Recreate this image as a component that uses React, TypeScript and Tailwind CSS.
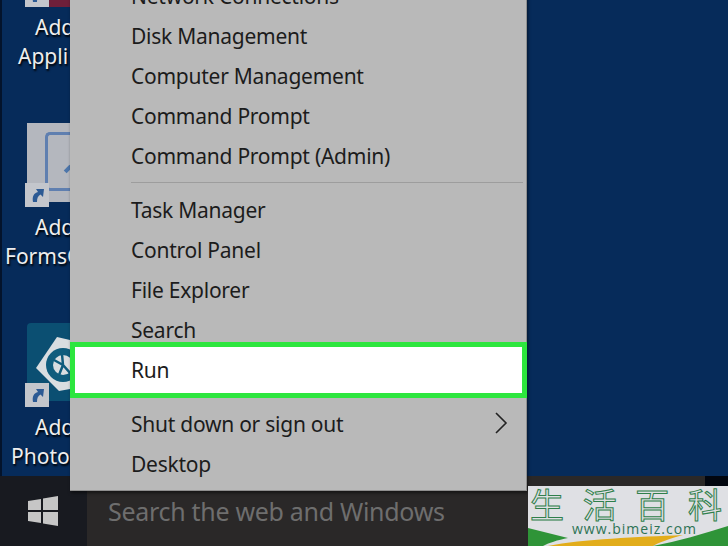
import React from "react";

const Shortcut = ({ className }: { className: string }) => (
  <div className={`absolute w-6 h-6 bg-[#c3c6cc] flex items-center justify-center ${className}`}>
    <svg width="18" height="18" viewBox="0 0 18 18">
      <path d="M5 16 C4 10 6 7 10 6 L8 3 L16 3 L15 11 L12.5 8.5 C10 10 9 12 9 16 Z" fill="#2c5a94" />
    </svg>
  </div>
);

const DesktopLabel = ({ lines, className }: { lines: [string, string]; className: string }) => (
  <div className={`absolute text-[21px] leading-[29px] text-[#eeeeee] whitespace-nowrap [text-shadow:1px_2px_2px_#000] ${className}`}>
    <div className="pl-[17px]">{lines[0]}</div>
    <div>{lines[1]}</div>
  </div>
);

const Item = ({ label }: { label: string }) => (
  <div className="h-10 shrink-0 pl-[61px] pt-[4px] flex items-center text-[21px] tracking-[-0.25px] text-[#1c1c1c] whitespace-nowrap">{label}</div>
);

export default function App() {
  return (
    <div className="relative w-[728px] h-[546px] overflow-hidden bg-[#062b5a] font-['Noto_Sans',sans-serif]">
      {/* left edge of the screen */}
      <div className="absolute left-0 top-0 w-[2px] h-full bg-[#03132b]" />

      {/* desktop icons */}
      <div className="absolute left-[25px] top-0 w-[45px] h-[7px] bg-[#6e1f3a]" />
      <Shortcut className="left-[25px] top-[-17px]" />
      <DesktopLabel lines={["Add", "Appli"]} className="left-[18px] top-[13px]" />

      <div className="absolute left-[27px] top-[123px] w-[43px] h-[79px] bg-[#b4b7be] pl-[18px] pt-[9px]">
        <div className="w-full h-[59px] border-[3px] border-r-0 border-[#5f7fb0] rounded-l-[5px] flex items-center">
          <div className="ml-[18px] mt-[14px] w-[8px] h-[8px] bg-[#4d76ab] rotate-45" />
        </div>
      </div>
      <Shortcut className="left-[25px] top-[183px]" />
      <DesktopLabel lines={["Add", "FormsC"]} className="left-[5px] top-[213px] [&>div:first-child]:pl-[30px]" />

      <div className="absolute left-[27px] top-[323px] w-[43px] h-[78px] bg-[#0b4f72] rounded-tl-[4px] overflow-hidden">
        <svg width="43" height="78" viewBox="0 0 43 78">
          <path d="M9 45 L30 14 L43 17 L43 66 L32 68 Z" fill="#d9dde0" />
          <circle cx="36" cy="42" r="17" fill="#0f5c7d" />
          <circle cx="36" cy="42" r="10" fill="#d9dde0" />
          <path d="M36 42 L27 37 M36 42 L32 52 M36 42 L35 31 M36 42 L43 50" stroke="#0f5c7d" strokeWidth="2.5" />
        </svg>
      </div>
      <Shortcut className="left-[25px] top-[383px]" />
      <DesktopLabel lines={["Add", "Photos"]} className="left-[11px] top-[413px] [&>div:first-child]:pl-[24px]" />

      {/* taskbar */}
      <div className="absolute left-0 right-0 bottom-0 h-[70px] flex">
        <div className="w-[87px] bg-[#181a20] flex items-center justify-center pb-[1px]">
          <svg width="30" height="30" viewBox="0 0 30 30" fill="#c6c6c6" className="-ml-[1px]">
            <path d="M0 5 L13 3 L13 14 L0 14 Z M15 2.6 L30 0 L30 14 L15 14 Z M0 16 L13 16 L13 27 L0 25 Z M15 16 L30 16 L30 30 L15 27.4 Z" />
          </svg>
        </div>
        <div className="w-[618px] bg-[#2a2828] pl-[21px] pt-[2px] flex items-center text-[25px] tracking-[-0.3px] text-[#6e6e6e] whitespace-nowrap">
          Search the web and Windows
        </div>
        <div className="flex-1 bg-[#02060f]" />
      </div>

      {/* context menu */}
      <div className="absolute left-[70px] top-[-25px] w-[457px] h-[516px] bg-[#b9b9b9] border-r border-b border-[#8f8f8f] shadow-[1px_2px_3px_rgba(0,0,0,0.5)] flex flex-col">
        <Item label="Network Connections" />
        <Item label="Disk Management" />
        <Item label="Computer Management" />
        <Item label="Command Prompt" />
        <Item label="Command Prompt (Admin)" />
        <div className="ml-[61px] mr-[3px] mt-[7px] mb-[6px] h-[1px] shrink-0 bg-[#9d9d9d]" />
        <Item label="Task Manager" />
        <Item label="Control Panel" />
        <Item label="File Explorer" />
        <Item label="Search" />
        <div className="h-[56px] shrink-0 -mt-[7px] -mb-[9px] z-10 -mr-[1px] bg-white border-[5px] border-[#2de63e] pl-[56px] pt-[2px] flex items-center text-[21px] tracking-[-0.25px] text-[#1c1c1c]">
          Run
        </div>
        <div className="h-[14px] shrink-0" />
        <div className="h-10 shrink-0 pl-[61px] pr-[18px] flex items-center justify-between text-[21px] tracking-[-0.25px] text-[#1c1c1c]">
          <span className="pt-[4px]">Shut down or sign out</span>
          <svg width="14" height="22" viewBox="0 0 14 22" fill="none" stroke="#222" strokeWidth="1.6">
            <path d="M2 1 L12 11 L2 21" />
          </svg>
        </div>
        <Item label="Desktop" />
      </div>

      {/* watermark */}
      <div className="absolute left-[528px] top-[486px] w-[200px] h-[60px] bg-[#dfe0e4] overflow-hidden">
        <div className="flex justify-between pl-[2px] pr-[6px] text-[34px] leading-[36px] font-['Noto_Sans_CJK_SC',sans-serif] text-transparent [-webkit-text-stroke:1px_#2f7f4b]">
          <span>生</span>
          <span>活</span>
          <span>百</span>
          <span>科</span>
        </div>
        <svg className="absolute left-0 bottom-0" width="200" height="20" viewBox="0 0 200 20">
          <path d="M0 2 L40 12 C30 14 20 17 15 20 L0 20 Z" fill="#2f9438" />
          <path d="M20 20 C55 13 110 11 155 9 C140 13 130 17 125 20 Z" fill="#e2ad1b" />
          <path d="M125 20 C150 15 175 8 200 0 L200 20 Z" fill="#2f9438" />
        </svg>
        <div className="absolute left-[44px] top-[34px] text-[14px] leading-[18px] tracking-[1px] text-[#2e7355] font-['Open_Sans',sans-serif] whitespace-nowrap">
          www.bimeiz.com
        </div>
      </div>
    </div>
  );
}
